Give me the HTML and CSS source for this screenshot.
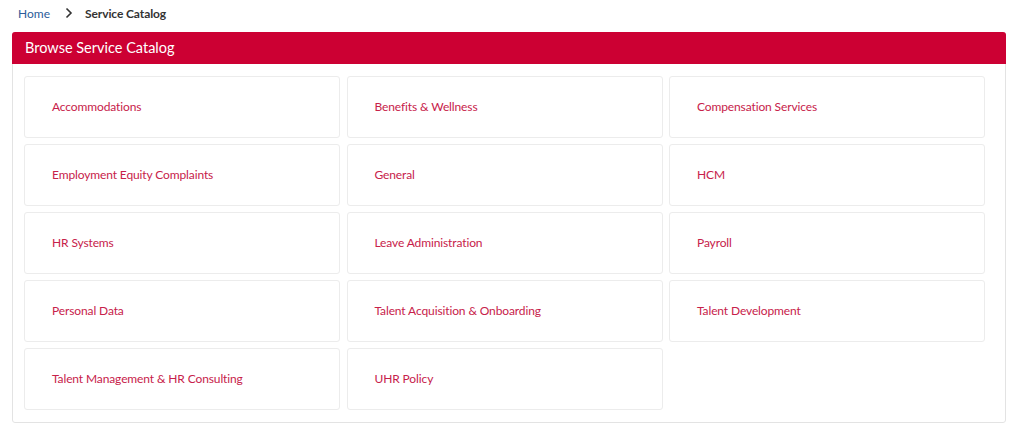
FILE: index.html
```html
<!DOCTYPE html>
<html>
<head>
<meta charset="utf-8">
<link rel="stylesheet" href="styles.css">
</head>
<body>
<nav class="crumbs">
  <a class="crumb-link" href="#">Home</a>
  <svg class="chev" width="10" height="12" viewBox="0 0 10 12"><path d="M2.5 1.5 L7 6 L2.5 10.5" fill="none" stroke="#333" stroke-width="1.6"/></svg>
  <span class="crumb-current">Service Catalog</span>
</nav>
<section class="panel">
  <header class="panel-head">Browse Service Catalog</header>
  <div class="grid">
    <a class="card" href="#">Accommodations</a>
    <a class="card" href="#">Benefits &amp; Wellness</a>
    <a class="card" href="#">Compensation Services</a>
    <a class="card" href="#">Employment Equity Complaints</a>
    <a class="card" href="#">General</a>
    <a class="card" href="#">HCM</a>
    <a class="card" href="#">HR Systems</a>
    <a class="card" href="#">Leave Administration</a>
    <a class="card" href="#">Payroll</a>
    <a class="card" href="#">Personal Data</a>
    <a class="card" href="#">Talent Acquisition &amp; Onboarding</a>
    <a class="card" href="#">Talent Development</a>
    <a class="card" href="#">Talent Management &amp; HR Consulting</a>
    <a class="card" href="#">UHR Policy</a>
  </div>
</section>
</body>
</html>
```
FILE: styles.css
```css
* { box-sizing: border-box; }
body {
  margin: 0;
  background: #fff;
  font-family: Lato, "Open Sans", sans-serif;
  color: #333;
}
.crumbs {
  display: flex;
  align-items: center;
  height: 28px;
  padding: 0 0 2px 18px;
  font-size: 12px;
}
.crumb-link {
  color: #2c5c9a;
  text-decoration: none;
}
.chev {
  margin: 0 11px 0 14px;
}
.crumb-current {
  font-weight: bold;
  color: #333;
  letter-spacing: -0.1px;
}
.panel {
  margin: 4px 11px 0 12px;
  border: 1px solid #e3e3e3;
  border-radius: 3px;
  height: 391px;
}
.panel-head {
  background: #cc0033;
  color: #fff;
  font-size: 14.5px;
  height: 32px;
  line-height: 32px;
  padding-left: 13px;
  border-radius: 3px 3px 0 0;
  margin: -1px -1px 0 -1px;
}
.grid {
  display: grid;
  grid-template-columns: repeat(3, 316px);
  grid-auto-rows: 62px;
  column-gap: 6.5px;
  row-gap: 6px;
  padding: 12px 0 0 11px;
}
.card {
  display: flex;
  align-items: center;
  padding: 0 0 2px 27px;
  border: 1px solid #ececec;
  border-radius: 3px;
  color: #c7214a;
  text-decoration: none;
  font-size: 12px;
  letter-spacing: -0.12px;
}
```
